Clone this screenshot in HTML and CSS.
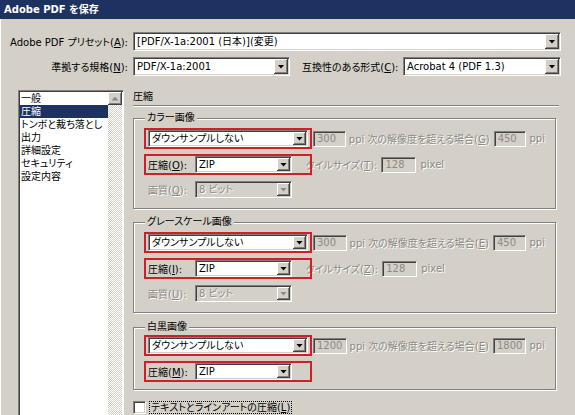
FILE: index.html
```html
<!DOCTYPE html>
<html lang="ja">
<head>
<meta charset="utf-8">
<title>Adobe PDF を保存</title>
<link rel="stylesheet" href="styles.css">
</head>
<body>
<div class="window">
  <div class="titlebar">Adobe PDF を保存</div>
  <div class="content">
    <div class="row row1">
      <span class="lbl-main">Adobe PDF プリセット(<u>A</u>):</span>
      <div class="combo combo-preset"><span class="val">[PDF/X-1a:2001 (日本)](変更)</span><span class="btn"><i class="tri"></i></span></div>
    </div>
    <div class="row row2">
      <span class="lbl-main">準拠する規格(<u>N</u>):</span>
      <div class="combo combo-std"><span class="val">PDF/X-1a:2001</span><span class="btn"><i class="tri"></i></span></div>
      <span class="lbl-compat">互換性のある形式(<u>C</u>):</span>
      <div class="combo combo-compat"><span class="val">Acrobat 4 (PDF 1.3)</span><span class="btn"><i class="tri"></i></span></div>
    </div>
    <div class="main">
      <div class="list">
        <ul class="items">
          <li>一般</li>
          <li class="sel">圧縮</li>
          <li>トンボと裁ち落とし</li>
          <li>出力</li>
          <li>詳細設定</li>
          <li>セキュリティ</li>
          <li>設定内容</li>
        </ul>
        <div class="scrollbar"><div class="sb-btn"><i class="tri-up"></i></div></div>
      </div>
      <div class="panel">
        <div class="heading">圧縮</div>
        <div class="separator"></div>

        <div class="group g1">
          <div class="legend">カラー画像</div>
          <div class="grow">
            <div class="mark"><div class="combo combo-sample"><span class="val">ダウンサンプルしない</span><span class="btn"><i class="tri"></i></span></div></div>
            <span class="field">300</span>
            <span class="dis txt-res">ppi 次の解像度を超える場合(<u>G</u>)</span>
            <span class="field field-hi">450</span>
            <span class="dis txt-unit">ppi</span>
          </div>
          <div class="grow">
            <div class="mark"><span class="lbl-in">圧縮(<u>O</u>):</span><div class="combo combo-small"><span class="val">ZIP</span><span class="btn"><i class="tri"></i></span></div></div>
            <span class="dis txt-tile">タイルサイズ(<u>T</u>):</span>
            <span class="field">128</span>
            <span class="dis txt-unit">pixel</span>
          </div>
          <div class="grow plain">
            <span class="lbl-in dis">画質(<u>Q</u>):</span>
            <div class="combo combo-small disabled"><span class="val">8 ビット</span><span class="btn"><i class="tri"></i></span></div>
          </div>
        </div>

        <div class="group g2">
          <div class="legend">グレースケール画像</div>
          <div class="grow">
            <div class="mark"><div class="combo combo-sample"><span class="val">ダウンサンプルしない</span><span class="btn"><i class="tri"></i></span></div></div>
            <span class="field">300</span>
            <span class="dis txt-res">ppi 次の解像度を超える場合(<u>E</u>)</span>
            <span class="field field-hi">450</span>
            <span class="dis txt-unit">ppi</span>
          </div>
          <div class="grow">
            <div class="mark"><span class="lbl-in">圧縮(<u>I</u>):</span><div class="combo combo-small"><span class="val">ZIP</span><span class="btn"><i class="tri"></i></span></div></div>
            <span class="dis txt-tile">タイルサイズ(<u>Z</u>):</span>
            <span class="field">128</span>
            <span class="dis txt-unit">pixel</span>
          </div>
          <div class="grow plain">
            <span class="lbl-in dis">画質(<u>U</u>):</span>
            <div class="combo combo-small disabled"><span class="val">8 ビット</span><span class="btn"><i class="tri"></i></span></div>
          </div>
        </div>

        <div class="group g3">
          <div class="legend">白黒画像</div>
          <div class="grow">
            <div class="mark"><div class="combo combo-sample"><span class="val">ダウンサンプルしない</span><span class="btn"><i class="tri"></i></span></div></div>
            <span class="field">1200</span>
            <span class="dis txt-res">ppi 次の解像度を超える場合(<u>E</u>)</span>
            <span class="field field-hi">1800</span>
            <span class="dis txt-unit">ppi</span>
          </div>
          <div class="grow">
            <div class="mark"><span class="lbl-in">圧縮(<u>M</u>):</span><div class="combo combo-small"><span class="val">ZIP</span><span class="btn"><i class="tri"></i></span></div></div>
          </div>
        </div>

        <div class="check-row">
          <span class="checkbox"></span>
          <span class="check-label">テキストとラインアートの圧縮(<u>L</u>)</span>
        </div>
      </div>
    </div>
  </div>
</div>
</body>
</html>
```

FILE: styles.css
```css
html, body {
  margin: 0;
  padding: 0;
  background: #d4d0c8;
}

.window {
  width: 575px;
  height: 415px;
  overflow: hidden;
  background: #d4d0c8;
  font-family: "DejaVu Sans", "Noto Sans CJK JP", sans-serif;
  font-size: 10px;
  color: #000;
  font-feature-settings: "palt";
  box-shadow: inset 1px 0 0 #fff;
}

u { text-decoration: underline; text-underline-offset: 1px; }

.titlebar {
  height: 19px;
  line-height: 19px;
  background: #1e3262;
  color: #fff;
  font-weight: bold;
  padding-left: 4px;
}

.content {
  padding-top: 13px;
}

.row {
  display: flex;
  align-items: center;
}

.row2 { margin-top: 6px; }

.lbl-main {
  width: 128px;
  text-align: right;
  margin-right: 5px;
  white-space: nowrap;
}

.lbl-compat {
  width: 101px;
  margin-left: 12px;
  white-space: nowrap;
}

/* combo box */
.combo {
  display: flex;
  box-sizing: border-box;
  background: #fff;
  border: 1px solid;
  border-color: #808080 #fff #fff #808080;
  box-shadow: inset 1px 1px 0 #404040, inset -1px -1px 0 #d4d0c8;
  padding: 1px;
  height: 17px;
}

.combo .val {
  flex: 1;
  padding-left: 2px;
  line-height: 13px;
  white-space: nowrap;
  overflow: hidden;
}

.combo .btn {
  width: 13px;
  background: #d4d0c8;
  box-shadow: inset -1px -1px 0 #404040, inset 1px 1px 0 #fff, inset -2px -2px 0 #808080;
  display: flex;
  align-items: center;
  justify-content: center;
}

.tri {
  display: block;
  width: 7px;
  height: 4px;
  background: #000;
  clip-path: polygon(0 0, 100% 0, 50% 100%);
}

.combo.disabled { background: #d4d0c8; }
.combo.disabled .val { color: #8d8a83; text-shadow: 1px 1px 0 #fff; }
.combo.disabled .tri { background: #8d8a83; }

.combo-preset { width: 428px; height: 19px; }
.combo-std { width: 157px; height: 19px; }
.combo-compat { width: 158px; height: 19px; }
.combo-preset .val, .combo-std .val, .combo-compat .val { line-height: 15px; }
.combo-preset .btn, .combo-std .btn, .combo-compat .btn { width: 14px; }

.combo-sample { width: 160px; }
.combo-small { width: 97px; }

/* main */
.main {
  display: flex;
  margin-top: 14px;
  padding-left: 18px;
  gap: 9px;
}

.list {
  display: flex;
  width: 106px;
  height: 340px;
  box-sizing: border-box;
  border: 1px solid;
  border-color: #808080 #fff #fff #808080;
  box-shadow: inset 1px 1px 0 #404040;
  padding: 1px 1px 0 1px;
  background: #fff;
}

.items {
  list-style: none;
  margin: 0;
  padding: 0;
  flex: 1;
}

.items li {
  height: 13px;
  line-height: 13px;
  padding-left: 1px;
  white-space: nowrap;
}

.items li.sel {
  background: #1e3262;
  color: #fff;
}

.scrollbar {
  width: 14px;
  background: repeating-conic-gradient(#d4d0c8 0 25%, #fff 0 50%) 0 0 / 2px 2px;
}

.sb-btn {
  height: 13px;
  background: #d4d0c8;
  box-shadow: inset -1px -1px 0 #404040, inset 1px 1px 0 #fff, inset -2px -2px 0 #808080;
  display: flex;
  align-items: center;
  justify-content: center;
}

.tri-up {
  display: block;
  width: 7px;
  height: 4px;
  background: #8d8a83;
  clip-path: polygon(50% 0, 100% 100%, 0 100%);
}

.panel {
  width: 426px;
}

.heading {
  height: 15px;
  line-height: 14px;
}

.separator {
  height: 1px;
  background: #808080;
  border-bottom: 1px solid #fff;
}

.group {
  margin-top: 11px;
  border: 1px solid #808080;
  box-shadow: inset 1px 1px 0 #fff, 1px 1px 0 #fff;
  padding: 0 10px 10px 10px;
  width: 423px;
  box-sizing: border-box;
}

.g2 { margin-top: 13px; }
.g3 { margin-top: 14px; padding-bottom: 7px; }

.legend {
  width: fit-content;
  margin: -7px 0 4px 1px;
  padding: 0 2px;
  height: 12px;
  line-height: 12px;
  background: #d4d0c8;
}

.g3 .legend { margin-bottom: 2px; }

.grow {
  display: flex;
  align-items: center;
  height: 21px;
  white-space: nowrap;
}

.grow + .grow { margin-top: 5px; }

.grow.plain {
  height: 17px;
  margin-top: 6px;
  padding-left: 4px;
}

.mark {
  display: flex;
  align-items: center;
  box-sizing: border-box;
  width: 168px;
  height: 21px;
  border: 2px solid #cf1f2b;
  padding: 0 2px;
  position: relative;
  z-index: 1;
}

.lbl-in {
  width: 47px;
  white-space: nowrap;
}

.dis {
  color: #8d8a83;
  text-shadow: 1px 1px 0 #fff;
}

.field {
  width: 35px;
  height: 16px;
  box-sizing: border-box;
  border: 1px solid;
  border-color: #808080 #fff #fff #808080;
  box-shadow: inset 1px 1px 0 #404040, inset -1px -1px 0 #d4d0c8;
  background: #d4d0c8;
  color: #8d8a83;
  padding-left: 3px;
  line-height: 14px;
  margin-left: 1px;
}

.txt-res { margin-left: 3px; }
.field-hi { width: 34px; margin-left: 4px; }
.txt-unit { margin-left: 4px; }
.txt-tile { margin-left: -6px; margin-right: 3px; }

.check-row {
  display: flex;
  align-items: center;
  margin-top: 11px;
  gap: 3px;
}

.checkbox {
  width: 13px;
  height: 13px;
  box-sizing: border-box;
  background: #fff;
  border: 1px solid;
  border-color: #808080 #fff #fff #808080;
  box-shadow: inset 1px 1px 0 #404040, inset -1px -1px 0 #d4d0c8;
}

.check-label {
  border: 1px dotted #000;
  padding: 0 1px;
  line-height: 11px;
}
```
